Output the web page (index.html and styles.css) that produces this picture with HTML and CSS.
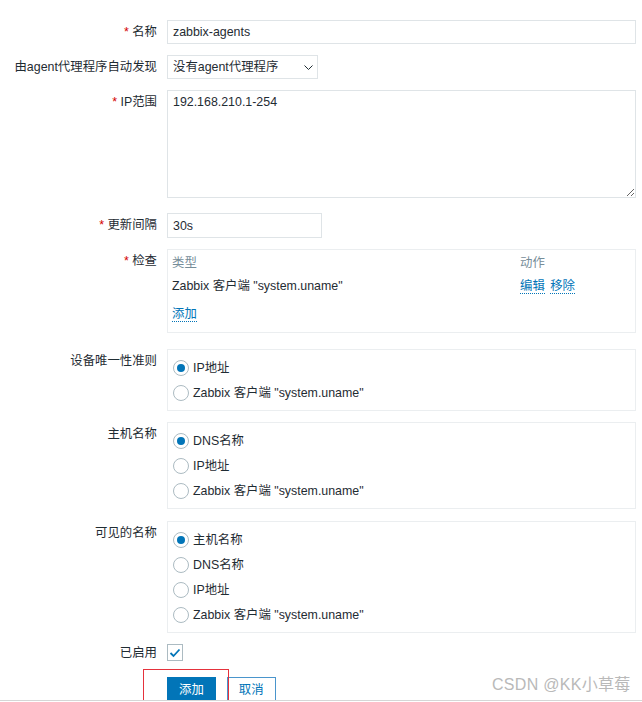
FILE: index.html
```html
<!DOCTYPE html>
<html lang="zh-CN">
<head>
    <meta charset="UTF-8">
    <meta name="viewport" content="width=device-width, initial-scale=1.0">
    <title>自动发现规则</title>
    <link rel="stylesheet" href="styles.css">
</head>
<body>
    <div class="page">
        <form class="form-list">
            <div class="row">
                <label class="label"><span class="req">*</span> 名称</label>
                <div class="field"><input type="text" class="text wide" value="zabbix-agents"></div>
            </div>
            <div class="row">
                <label class="label">由agent代理程序自动发现</label>
                <div class="field">
                    <div class="select">
                        <span>没有agent代理程序</span>
                        <svg width="9" height="5" viewBox="0 0 9 5"><path d="M0.5 0.5l4 4 4-4" fill="none" stroke="#1f2c33" stroke-width="1"/></svg>
                    </div>
                </div>
            </div>
            <div class="row row-area">
                <label class="label"><span class="req">*</span> IP范围</label>
                <div class="field"><textarea class="area">192.168.210.1-254</textarea></div>
            </div>
            <div class="row">
                <label class="label"><span class="req">*</span> 更新间隔</label>
                <div class="field"><input type="text" class="text short" value="30s"></div>
            </div>
            <div class="row row-loose">
                <label class="label"><span class="req">*</span> 检查</label>
                <div class="field">
                    <div class="box checks">
                        <div class="checks-head">
                            <span class="col-type">类型</span>
                            <span class="col-act">动作</span>
                        </div>
                        <div class="checks-row">
                            <span class="col-type">Zabbix 客户端 "system.uname"</span>
                            <span class="col-act"><a class="link">编辑</a> <a class="link">移除</a></span>
                        </div>
                        <div class="checks-add"><a class="link">添加</a></div>
                    </div>
                </div>
            </div>
            <div class="row">
                <label class="label">设备唯一性准则</label>
                <div class="field">
                    <ul class="box radios">
                        <li><input type="radio" name="uniq" checked><span>IP地址</span></li>
                        <li><input type="radio" name="uniq"><span>Zabbix 客户端 "system.uname"</span></li>
                    </ul>
                </div>
            </div>
            <div class="row row-gap12">
                <label class="label">主机名称</label>
                <div class="field">
                    <ul class="box radios">
                        <li><input type="radio" name="host" checked><span>DNS名称</span></li>
                        <li><input type="radio" name="host"><span>IP地址</span></li>
                        <li><input type="radio" name="host"><span>Zabbix 客户端 "system.uname"</span></li>
                    </ul>
                </div>
            </div>
            <div class="row">
                <label class="label">可见的名称</label>
                <div class="field">
                    <ul class="box radios">
                        <li><input type="radio" name="vis" checked><span>主机名称</span></li>
                        <li><input type="radio" name="vis"><span>DNS名称</span></li>
                        <li><input type="radio" name="vis"><span>IP地址</span></li>
                        <li><input type="radio" name="vis"><span>Zabbix 客户端 "system.uname"</span></li>
                    </ul>
                </div>
            </div>
            <div class="row row-check">
                <label class="label">已启用</label>
                <div class="field">
                    <span class="checkbox">
                        <svg width="12" height="10" viewBox="0 0 12 10"><path d="M1.5 5l3 3 6-6.5" fill="none" stroke="#0275b8" stroke-width="1.8"/></svg>
                    </span>
                </div>
            </div>
            <div class="row">
                <span class="label"></span>
                <div class="field buttons">
                    <button type="button" class="btn">添加</button>
                    <button type="button" class="btn btn-alt">取消</button>
                </div>
            </div>
        </form>
        <div class="mark"></div>
        <div class="watermark">CSDN @KK小草莓</div>
    </div>
</body>
</html>
```

FILE: styles.css
```css
*{
    margin: 0;
    padding: 0;
    box-sizing: border-box;
}
body{
    background-color: #fff;
    font-family: "Liberation Sans", Arial, "Noto Sans CJK SC", sans-serif;
    font-size: 12.4px;
    line-height: 14px;
    color: #1f2c33;
}
.page{
    position: relative;
    height: 701px;
    border-bottom: 1px solid #d6d6d6;
    overflow: hidden;
    padding-top: 20px;
}

.form-list{
    width: 636px;
}
.row{
    display: grid;
    grid-template-columns: 157px 1fr;
    column-gap: 10px;
    margin-bottom: 11px;
}
.row-area{
    margin-bottom: 15px;
}
.row-loose{
    margin-bottom: 16px;
}
.row-gap12{
    margin-bottom: 12px;
}
.row-check{
    margin-bottom: 16px;
}
.label{
    text-align: right;
    padding-top: 5px;
    white-space: nowrap;
}
.row-check .label{
    padding-top: 2px;
}
.req{
    color: #d40000;
}

.text{
    height: 24px;
    border: 1px solid #dfe4e7;
    padding: 0 5px;
    font: inherit;
    color: #1f2c33;
    outline: none;
    display: block;
}
.wide{
    width: 469px;
}
.short{
    width: 155px;
    height: 25px;
}
.select{
    width: 151px;
    height: 24px;
    border: 1px solid #dfe4e7;
    padding: 0 4px 0 5px;
    display: flex;
    align-items: center;
    justify-content: space-between;
}
.area{
    display: block;
    width: 469px;
    height: 108px;
    border: 1px solid #dfe4e7;
    padding: 4px 5px;
    font: inherit;
    color: #1f2c33;
    resize: vertical;
    outline: none;
}

.box{
    border: 1px solid #ebeef0;
    list-style: none;
}
.checks{
    padding: 3px 4px 0;
}
.checks-head, .checks-row{
    display: flex;
}
.checks-head{
    padding: 3px 0;
    color: #768d99;
}
.checks-row{
    padding: 6px 0;
}
.col-type{
    width: 348px;
}
.checks-add{
    padding: 8px 0 11px;
}
.link{
    color: #0275b8;
    border-bottom: 1px dotted #0275b8;
    cursor: pointer;
}
.col-act .link + .link{
    margin-left: 2px;
}

.radios{
    padding: 5px 5px;
}
.radios li{
    height: 25px;
    display: flex;
    align-items: center;
    gap: 4px;
}
.radios input{
    appearance: none;
    width: 16px;
    height: 16px;
    border: 1px solid #acbbc2;
    border-radius: 50%;
    background-color: #fff;
    display: grid;
    place-items: center;
    margin: 0;
}
.radios input:checked::after{
    content: "";
    width: 8px;
    height: 8px;
    border-radius: 50%;
    background-color: #0275b8;
}

.checkbox{
    width: 16px;
    height: 17px;
    border: 1px solid #acbbc2;
    display: flex;
    align-items: center;
    justify-content: center;
}

.buttons{
    display: flex;
    gap: 11px;
}
.btn{
    height: 25px;
    padding: 0 11px;
    border: 1px solid #0275b8;
    background-color: #0275b8;
    color: #fff;
    font: inherit;
    cursor: pointer;
}
.btn-alt{
    background-color: #fff;
    color: #0275b8;
    border-color: #4a95cc;
}

.mark{
    position: absolute;
    left: 143px;
    top: 669px;
    width: 86px;
    height: 40px;
    border: 1px solid #e5323c;
}
.watermark{
    position: absolute;
    left: 492px;
    top: 675px;
    font-size: 16px;
    line-height: 20px;
    color: #b9b9b9;
    letter-spacing: 0.3px;
}
```
